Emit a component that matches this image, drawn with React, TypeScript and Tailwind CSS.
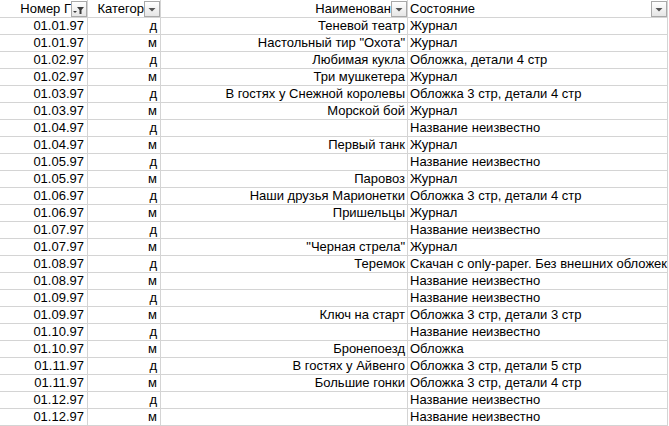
import React from "react";

const rows: [string, string, string, string][] = [
  ["01.01.97", "д", "Теневой театр", "Журнал"],
  ["01.01.97", "м", "Настольный тир \"Охота\"", "Журнал"],
  ["01.02.97", "д", "Любимая кукла", "Обложка, детали 4 стр"],
  ["01.02.97", "м", "Три мушкетера", "Журнал"],
  ["01.03.97", "д", "В гостях у Снежной королевы", "Обложка 3 стр, детали 4 стр"],
  ["01.03.97", "м", "Морской бой", "Журнал"],
  ["01.04.97", "д", "", "Название неизвестно"],
  ["01.04.97", "м", "Первый танк", "Журнал"],
  ["01.05.97", "д", "", "Название неизвестно"],
  ["01.05.97", "м", "Паровоз", "Журнал"],
  ["01.06.97", "д", "Наши друзья Марионетки", "Обложка 3 стр, детали 4 стр"],
  ["01.06.97", "м", "Пришельцы", "Журнал"],
  ["01.07.97", "д", "", "Название неизвестно"],
  ["01.07.97", "м", "\"Черная стрела\"", "Журнал"],
  ["01.08.97", "д", "Теремок", "Скачан с only-paper. Без внешних обложек"],
  ["01.08.97", "м", "", "Название неизвестно"],
  ["01.09.97", "д", "", "Название неизвестно"],
  ["01.09.97", "м", "Ключ на старт", "Обложка 3 стр, детали 3 стр"],
  ["01.10.97", "д", "", "Название неизвестно"],
  ["01.10.97", "м", "Бронепоезд", "Обложка"],
  ["01.11.97", "д", "В гостях у Айвенго", "Обложка 3 стр, детали 5 стр"],
  ["01.11.97", "м", "Большие гонки", "Обложка 3 стр, детали 4 стр"],
  ["01.12.97", "д", "", "Название неизвестно"],
  ["01.12.97", "м", "", "Название неизвестно"],
];

function FilterButton({ active }: { active?: boolean }) {
  return (
    <div className="mt-px h-[16px] w-[16px] shrink-0 border border-[#a9a9a9] bg-gradient-to-b from-white to-[#e6e6e6]">
      <svg width="14" height="14" viewBox="0 0 14 14" className="block">
        {active ? (
          <>
            <polygon points="5,5 12,5 9.5,8 9.5,12 7.5,12 7.5,8" fill="#3c3c3c" />
            <polygon points="1,9 5,9 3,11" fill="#3c3c3c" />
          </>
        ) : (
          <polygon points="3.5,6 10.5,6 7,9.5" fill="#555" />
        )}
      </svg>
    </div>
  );
}

const cellBase = "border-r border-b border-[#d4d4d4] whitespace-nowrap";

export default function App() {
  return (
    <div
      className="w-[669px] h-[426px] overflow-hidden bg-white text-black text-[13px] leading-[16px]"
      style={{ fontFamily: '"Liberation Sans", Arial, sans-serif' }}
    >
      <div className="grid grid-cols-[88px_73px_247px_260px]">
        {/* header */}
        <div className={`${cellBase} h-[18px] flex items-start`}>
          <div className="flex-1 overflow-hidden text-right pt-px">Номер Г</div>
          <FilterButton active />
        </div>
        <div className={`${cellBase} h-[18px] flex items-start`}>
          <div className="flex-1 overflow-hidden text-right pt-px">Категор</div>
          <FilterButton />
        </div>
        <div className={`${cellBase} h-[18px] flex items-start`}>
          <div className="flex-1 overflow-hidden text-right pt-px">Наименован</div>
          <FilterButton />
        </div>
        <div className={`${cellBase} h-[18px] flex items-start`}>
          <div className="flex-1 overflow-hidden text-left pl-[2px] pt-px">Состояние</div>
          <FilterButton />
        </div>
        {rows.map((r, i) => (
          <React.Fragment key={i}>
            <div className={`${cellBase} h-[17px] text-right pr-[3px]`}>{r[0]}</div>
            <div className={`${cellBase} h-[17px] text-right pr-[3px]`}>{r[1]}</div>
            <div className={`${cellBase} h-[17px] text-right pr-[2px]`}>{r[2]}</div>
            <div className={`${cellBase} h-[17px] text-left pl-[2px] overflow-visible`}>{r[3]}</div>
          </React.Fragment>
        ))}
      </div>
    </div>
  );
}
